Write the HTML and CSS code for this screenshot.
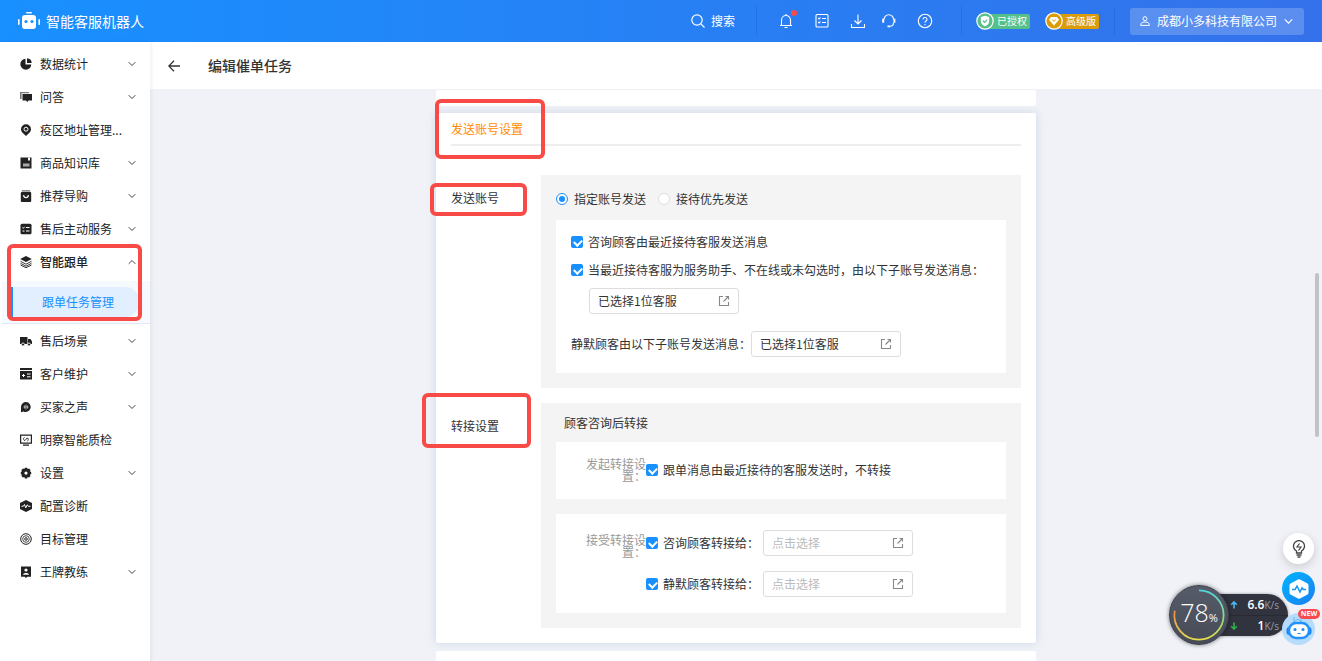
FILE: index.html
```html
<!DOCTYPE html>
<html lang="zh-CN">
<head>
<meta charset="utf-8">
<title>智能客服机器人</title>
<link rel="stylesheet" href="styles.css">
</head>
<body>
<svg class="defs" aria-hidden="true">
  <symbol id="down" viewBox="0 0 8 8"><path d="M.7 2.200 4 5.500l3.300-3.300" fill="none" stroke="currentColor" stroke-width="1"/></symbol>
  <symbol id="open" viewBox="0 0 12 12"><path d="M5 1.500H1.500v9h9V7M7.500 1.500h3v3M10.500 1.500 5.500 6.500" fill="none" stroke="currentColor" stroke-width="1.100"/></symbol>
</svg>
<div class="app">
  <header class="topbar">
    <a class="brand" href="#">
      <svg width="22" height="18" viewBox="0 0 22 18" fill="#fff"><rect x="8" y="0" width="6" height="1.600" rx=".8"/><rect x="4" y="3" width="14" height="14" rx="3"/><rect x="0" y="7" width="1.600" height="6" rx=".8"/><rect x="20.400" y="7" width="1.600" height="6" rx=".8"/><circle cx="8" cy="9.500" r="1.600" fill="#1990ff"/><circle cx="14" cy="9.500" r="1.600" fill="#1990ff"/></svg>
      <span>智能客服机器人</span>
    </a>
    <button class="search" type="button">
      <svg width="14" height="14" viewBox="0 0 14 14" fill="none" stroke="#fff" stroke-width="1.200"><circle cx="6" cy="6" r="5.200"/><path d="m9.800 9.800 3.700 3.700"/></svg>
      <span>搜索</span>
    </button>
    <div class="tools">
      <button class="tool" type="button" aria-label="通知"><svg viewBox="0 0 16 16"><path d="M2 12.500h12M3.500 12.500V7a4.500 4.500 0 0 1 9 0v5.500M8 1v1.500M6.500 14.500h3"/></svg><i class="dot"></i></button>
      <button class="tool" type="button" aria-label="任务"><svg viewBox="0 0 16 16"><rect x="2" y="1.500" width="12" height="12.500" rx="1"/><path d="m4.300 5 .9.900L6.500 4.500M4.300 9l.9.900L6.500 8.500M8 5.500h4M8 9.500h4"/></svg></button>
      <div class="pair">
        <button class="tool" type="button" aria-label="下载"><svg viewBox="0 0 16 16"><path d="M8 1.500v9M4.500 7.500 8 11l3.500-3.500M1.500 11v3.500h13V11"/></svg></button>
        <button class="tool" type="button" aria-label="客服"><svg viewBox="0 0 16 16"><path d="M3 6.500a4.700 4.700 0 0 1 9.600 0M12.500 9.500c0 2.500-1.500 3.800-3.500 3.800"/><path d="M2.200 5.800v4M13.400 5.800v4" stroke-width="2"/><path d="M6.500 13.400h2.500" stroke-width="1.800"/></svg></button>
      </div>
      <button class="tool" type="button" aria-label="帮助"><svg viewBox="0 0 16 16"><circle cx="8" cy="8" r="6.700"/><path d="M6 6.500a2 2 0 1 1 2.800 1.800Q8 8.700 8 9.700M8 11v1.200"/></svg></button>
    </div>
    <div class="plans">
      <span class="plan plan-green"><svg viewBox="0 0 18 18"><circle cx="9" cy="9" r="8.200" fill="#55c08a" stroke="#fff" stroke-width="1.200"/><path d="M9 3.800 13.200 5v4.200c0 2.600-2 4.200-4.200 5-2.200-.8-4.200-2.400-4.200-5V5z" fill="#fff"/><path d="m7 8.800 1.600 1.500L11.200 7.600" fill="none" stroke="#55c08a" stroke-width="1.200"/></svg>已授权</span>
      <span class="plan plan-gold"><svg viewBox="0 0 18 18"><circle cx="9" cy="9" r="8.200" fill="#dc9c08" stroke="#fff" stroke-width="1.200"/><path d="M6 5h6l2 2.700L9 13.500 4 7.700z" fill="#fff"/><path d="M7.200 7.700 9 9.300l1.800-1.600" fill="none" stroke="#dc9c08"/></svg>高级版</span>
    </div>
    <button class="company" type="button">
      <svg width="10" height="10" viewBox="0 0 10 10" fill="none" stroke="#fff"><circle cx="5" cy="2.700" r="2"/><path d="M.7 9.400C.7 6.800 2 6 5 6s4.300.8 4.300 3.400z"/></svg>
      <span>成都小多科技有限公司</span>
      <svg width="9" height="9"><use href="#down"/></svg>
    </button>
  </header>
  <div class="body">
    <nav class="side">
      <a class="item" href="#"><svg class="ico" viewBox="0 0 12 12"><path d="M5.500.7v5.800h5.800A5.500 5.500 0 1 1 5.500.7z"/><path d="M7 .3A5 5 0 0 1 11.700 5H7z"/></svg><span>数据统计</span><svg class="chev"><use href="#down"/></svg></a>
      <a class="item" href="#"><svg class="ico" viewBox="0 0 12 12"><path d="M0 1h9v1.200H1.600V8H0z" opacity=".6"/><path d="M2.500 3H12v6.500H8.500L7.300 11 6 9.500H2.500z"/></svg><span>问答</span><svg class="chev"><use href="#down"/></svg></a>
      <a class="item" href="#"><svg class="ico" viewBox="0 0 12 12"><path d="M6 .3a5 5 0 0 1 5 5C11 8 8.500 9.800 6 12 3.500 9.800 1 8 1 5.300a5 5 0 0 1 5-5z"/><circle cx="6" cy="5.200" r="2" fill="none" stroke="#fff"/></svg><span>疫区地址管理...</span></a>
      <a class="item" href="#"><svg class="ico" viewBox="0 0 12 12"><path d="M.5.500h11v11H.5z"/><path d="M8 .5h2v3H8z" fill="#fff"/><path d="M3 6.500h6.500v3H3z" fill="#aaa"/></svg><span>商品知识库</span><svg class="chev"><use href="#down"/></svg></a>
      <a class="item" href="#"><svg class="ico" viewBox="0 0 12 12"><rect x=".8" y="2" width="10.400" height="10" rx="1"/><path d="M1.800.3h8.400v1.200H1.800z" opacity=".7"/><path d="M3.700 5c0 3.500 4.600 3.500 4.600 0" fill="none" stroke="#fff" stroke-width="1.200"/></svg><span>推荐导购</span><svg class="chev"><use href="#down"/></svg></a>
      <a class="item" href="#"><svg class="ico" viewBox="0 0 12 12"><rect x=".5" y=".8" width="11" height="10.500" rx="1.500"/><path d="m2.500 4.500.8.800 1.300-1.500M6 4.500h3.500M2.500 8h2M6 8h3.500" fill="none" stroke="#fff"/></svg><span>售后主动服务</span><svg class="chev"><use href="#down"/></svg></a>
      <div class="group">
        <a class="item item-open" href="#"><svg class="ico" viewBox="0 0 12 12"><path d="m6 0 5.800 3L6 6 .2 3z"/><path d="M.5 5.300 6 8.200l5.500-2.900M.5 7.300 6 10.200l5.500-2.900M.5 9 6 11.700 11.500 9" fill="none" stroke="#222" stroke-width=".9"/></svg><span>智能跟单</span><svg class="chev chev-up"><use href="#down"/></svg></a>
        <div class="sub"><a class="sub-item" href="#">跟单任务管理</a></div>
        <i class="mark mark-group"></i>
      </div>
      <a class="item" href="#"><svg class="ico" viewBox="0 0 12 12"><path d="M0 2h7.500v7H0zM8 4h2.500L12 6.500V9H8z"/><g stroke="#fff" stroke-width=".8"><circle cx="3" cy="9.500" r="1.500"/><circle cx="9" cy="9.500" r="1.500"/></g></svg><span>售后场景</span><svg class="chev"><use href="#down"/></svg></a>
      <a class="item" href="#"><svg class="ico" viewBox="0 0 12 12"><path d="M0 0h12v2H0zM0 3h12v8.500H0z"/><path d="M2 7.500h3M3.500 6v3M7 6h3.500M7 8.800h3.500" fill="none" stroke="#fff"/></svg><span>客户维护</span><svg class="chev"><use href="#down"/></svg></a>
      <a class="item" href="#"><svg class="ico" viewBox="0 0 12 12"><path d="M6 1a5 5 0 1 1-2.500 9.500L1 11.200V6a5 5 0 0 1 5-5z"/><path d="M6 3.500v5M3.500 6h5M4.500 4.500v3M7.500 4.500v3" stroke="#aaa"/></svg><span>买家之声</span><svg class="chev"><use href="#down"/></svg></a>
      <a class="item" href="#"><svg class="ico" viewBox="0 0 12 12"><path d="M.6 1.200h10.800v8H.6zM3 11.200h6" fill="none" stroke="#222" stroke-width="1.200"/><path d="M4.500 3.500Q3 4 3.700 5.500T5 6.500L7 4q1.500 0 1.300 1.500T7.500 7" fill="none" stroke="#222" stroke-width=".9"/></svg><span>明察智能质检</span></a>
      <a class="item" href="#"><svg class="ico" viewBox="0 0 12 12"><path d="M4.800.8h2.400l.4 1.200 1.500-.4 1.400 1.500-.5 1.400 1.200.5v2.200l-1.200.4.4 1.600L9 10.500l-1.400-.4-.4 1.300H4.800l-.4-1.300-1.500.4-1.500-1.500.5-1.400L.8 7.200V5l1.100-.5-.5-1.400L3 1.600l1.400.4z"/><circle cx="6" cy="6.100" r="1.600" fill="#fff"/></svg><span>设置</span><svg class="chev"><use href="#down"/></svg></a>
      <a class="item" href="#"><svg class="ico" viewBox="0 0 12 12"><path d="m6 0 6 3v6l-6 3-6-3V3z"/><path d="M1.500 6.300h1.700L4.500 4.500l1.300 3.300 1.500-3 1 1.500h2.200" fill="none" stroke="#fff"/></svg><span>配置诊断</span></a>
      <a class="item" href="#"><svg class="ico" viewBox="0 0 12 12"><g fill="none" stroke="#222"><circle cx="6" cy="6" r="5.300"/><circle cx="6" cy="6" r="3.300" stroke-width=".8"/><circle cx="6" cy="6" r="1.300"/></g></svg><span>目标管理</span></a>
      <a class="item" href="#"><svg class="ico" viewBox="0 0 12 12"><path d="M1 .5h10v10.300H7.300L6 12l-1.300-1.200H1z"/><circle cx="6" cy="4" r="1.600" fill="#fff"/><path d="M3 8.700C3 6.500 9 6.500 9 8.700z" fill="#fff"/></svg><span>王牌教练</span><svg class="chev"><use href="#down"/></svg></a>
    </nav>
    <main class="main">
      <div class="pagehead">
        <button class="back" type="button" aria-label="返回"><svg width="12" height="12" viewBox="0 0 12 12" fill="none" stroke="#333" stroke-width="1.300"><path d="M12 6H1M6 .8.800 6 6 11.200"/></svg></button>
        <h1>编辑催单任务</h1>
      </div>
      <div class="scroll">
        <div class="card card-prev"></div>
        <form class="card card-main">
          <h2><span class="anchor">发送账号设置<i class="mark mark-title"></i></span></h2>
          <section class="field">
            <h3><span class="anchor">发送账号<i class="mark mark-account"></i></span></h3>
            <div class="panel">
              <div class="radios">
                <label><input type="radio" name="mode" checked>指定账号发送</label>
                <label><input type="radio" name="mode">接待优先发送</label>
              </div>
              <div class="box box-account">
                <label class="line"><input type="checkbox" checked>咨询顾客由最近接待客服发送消息</label>
                <label class="line"><input type="checkbox" checked>当最近接待客服为服务助手、不在线或未勾选时，由以下子账号发送消息：</label>
                <button class="pick pick-indent" type="button"><span>已选择1位客服</span><svg><use href="#open"/></svg></button>
                <div class="silent"><span>静默顾客由以下子账号发送消息：</span><button class="pick" type="button"><span>已选择1位客服</span><svg><use href="#open"/></svg></button></div>
              </div>
            </div>
          </section>
          <section class="field">
            <h3><span class="anchor">转接设置<i class="mark mark-transfer"></i></span></h3>
            <div class="panel">
              <h4>顾客咨询后转接</h4>
              <div class="box box-transfer">
                <span class="hint">发起转接设置：</span>
                <div class="rows">
                  <div class="row"><label><input type="checkbox" checked>跟单消息由最近接待的客服发送时，不转接</label></div>
                </div>
              </div>
              <div class="box box-transfer">
                <span class="hint hint-low">接受转接设置：</span>
                <div class="rows">
                  <div class="row"><label><input type="checkbox" checked>咨询顾客转接给：</label><button class="pick pick-empty" type="button"><span>点击选择</span><svg><use href="#open"/></svg></button></div>
                  <div class="row"><label><input type="checkbox" checked>静默顾客转接给：</label><button class="pick pick-empty" type="button"><span>点击选择</span><svg><use href="#open"/></svg></button></div>
                </div>
              </div>
            </div>
          </section>
        </form>
        <div class="card card-next"></div>
      </div>
    </main>
  </div>
  <i class="thumb"></i>
  <div class="meter">
    <div class="rates">
      <div class="rate"><svg viewBox="0 0 8 8" stroke="#4db8f5"><path d="M4 7.500V1M1.200 3.800 4 1l2.800 2.800"/></svg><b>6.6</b><span>K/s</span></div>
      <div class="rate"><svg viewBox="0 0 8 8" stroke="#2fb344"><path d="M4 .5V7M1.200 4.200 4 7l2.800-2.800"/></svg><b>1</b><span>K/s</span></div>
    </div>
    <div class="gauge">
      <svg class="ring" viewBox="0 0 60 60" fill="none" stroke-width="1.800">
        <defs><linearGradient id="arc" x1="0" y1="1" x2="0" y2="0"><stop offset="0" stop-color="#e5dc50"/><stop offset=".35" stop-color="#9edb78"/><stop offset="1" stop-color="#4fd6dc"/></linearGradient><linearGradient id="arc2" x1="0" y1="1" x2="0" y2="0"><stop offset="0" stop-color="#e5dc50"/><stop offset="1" stop-color="#ee8c46"/></linearGradient></defs>
        <path d="M30 4.500a25.500 25.500 0 0 1 0 51" stroke="url(#arc)"/><path d="M30 55.500A25.500 25.500 0 0 1 4.900 25.500" stroke="url(#arc2)"/>
      </svg>
      <span class="pct">78<small>%</small></span>
    </div>
  </div>
  <div class="floats">
    <button class="fab fab-tip" type="button" aria-label="提示"><svg width="14" height="18" viewBox="0 0 14 18" fill="none" stroke="#444" stroke-width="1.300"><path d="M4.500 13v-2A5.500 5.500 0 1 1 9.500 11v2zM4.500 15h5M5.500 17h3"/><path d="M7.500 3.500 5 7h4l-2.500 3.500" stroke-width="1.200"/></svg></button>
    <button class="fab fab-pulse" type="button" aria-label="诊断"><svg width="20" height="20" viewBox="0 0 20 20"><path d="M9 .6q1-.6 2 0l7.500 4q1 .6 1 1.700v7.400q0 1.100-1 1.700l-7.500 4q-1 .6-2 0l-7.500-4q-1-.6-1-1.700V6.300q0-1.100 1-1.700z" fill="#fff"/><path d="M3 10.500h3L8 7l3 6 2-4 1.200 1.500H17" fill="none" stroke="#1296f5" stroke-width="1.500"/></svg></button>
    <button class="fab fab-bot" type="button" aria-label="机器人"><svg width="32" height="32" viewBox="0 0 32 32"><path d="M11 4v5l4-3 3 3V5" fill="none" stroke="#64b5f6"/><rect x="3.500" y="14" width="25" height="8" rx="3" fill="#1585f5"/><rect x="6" y="10" width="20" height="15" rx="7" fill="#fff" stroke="#2490fa" stroke-width="2.500"/><circle cx="12" cy="16.500" r="1.500" fill="#1c87f5"/><circle cx="20" cy="16.500" r="1.500" fill="#1c87f5"/><path d="M14.500 20.500h3" stroke="#1c87f5"/></svg><span class="new">NEW</span></button>
  </div>
</div>
</body>
</html>
```

FILE: styles.css
```css
* { box-sizing: border-box; }
body { margin: 0; font: 12px/18px "Noto Sans CJK SC", "Noto Sans", sans-serif; color: #333; overflow: hidden; }
h1, h2, h3, h4 { margin: 0; font-weight: 400; font-size: 12px; }
button { font: inherit; color: inherit; border: 0; padding: 0; background: none; cursor: pointer; }
a { color: inherit; text-decoration: none; }
svg { flex: none; display: block; }
.defs { display: none; }
.app { position: relative; height: 100vh; display: flex; flex-direction: column; }

.topbar { flex: none; height: 42px; display: flex; align-items: center; padding: 0 18px; color: #fff; background: linear-gradient(90deg, #1990ff, #3471ea); }
.brand { display: flex; align-items: center; gap: 6px; font-size: 14px; margin-right: auto; }
.search { display: flex; align-items: center; gap: 6px; padding-right: 21px; }
.tools { display: flex; gap: 20px; height: 30px; align-items: center; padding: 0 28px 0 21px; border: solid rgba(0, 40, 140, .12); border-width: 0 1px; }
.pair { display: flex; gap: 15px; }
.tool { position: relative; width: 16px; height: 16px; }
.tool svg { width: 16px; height: 16px; fill: none; stroke: #fff; stroke-width: 1.1; }
.dot { position: absolute; right: -3px; top: -3px; width: 6px; height: 6px; border-radius: 50%; background: #fa4b4b; }
.plans { display: flex; align-items: center; gap: 15px; height: 30px; padding: 0 15px 0 14px; border-right: 1px solid rgba(0, 40, 140, .12); margin-right: 15px; }
.plan { display: flex; align-items: center; height: 15px; width: 54px; gap: 3px; border-radius: 2px; font-size: 10px; white-space: nowrap; }
.plan svg { width: 18px; height: 18px; }
.plan-green { background: linear-gradient(90deg, transparent 8px, #55c08a 8px); }
.plan-gold { background: linear-gradient(90deg, transparent 8px, #dc9c08 8px); }
.company { display: flex; align-items: center; gap: 7px; height: 27px; padding: 0 11px 0 10px; border-radius: 3px; background: rgba(255, 255, 255, .2); }

.body { flex: 1; min-height: 0; display: flex; }
.side { position: relative; z-index: 1; flex: none; width: 150px; padding-top: 5px; background: #fff; box-shadow: 1px 0 4px rgba(0, 20, 60, .08); }
.item { display: flex; align-items: center; gap: 8px; height: 33px; padding: 0 14px 0 20px; color: #222; white-space: nowrap; }
.ico { width: 12px; height: 12px; fill: #222; }
.chev { width: 8px; height: 8px; margin-left: auto; color: #444; }
.chev-up { transform: rotate(180deg); }
.item-open { font-weight: 500; }
.group { position: relative; }
.sub { margin: 3px 0 0 2px; padding: 6px 10px 6px 9px; background: #f6f9fe; border-bottom: 1px solid #e3eaf5; }
.sub-item { display: block; padding-left: 29px; line-height: 30px; background: #e1effe; border-left: 2px solid #1890ff; border-radius: 0 15px 15px 0; color: #1890ff; }

.mark { position: absolute; border: 4px solid #f84b47; border-radius: 6px; pointer-events: none; }
.anchor { position: relative; display: inline-block; }
.mark-group { left: 7px; right: 8px; top: -1px; bottom: 3px; }
.mark-title { left: -16px; top: -14px; width: 110px; height: 60px; }
.mark-account { left: -21px; top: 8px; width: 97px; height: 33px; }
.mark-transfer { left: -29px; top: -10px; width: 109px; height: 55px; }

.main { flex: 1; min-width: 0; display: flex; flex-direction: column; background: #f0f2f7; }
.pagehead { flex: none; height: 47px; display: flex; align-items: center; gap: 28px; padding-left: 18px; background: #fff; }
.back { width: 12px; height: 12px; }
.pagehead h1 { font-size: 14px; font-weight: 500; padding-bottom: 2px; }
.scroll { flex: 1; min-height: 0; overflow: hidden; display: flex; flex-direction: column; align-items: center; padding-top: 1px; }
.card { flex: none; width: 600px; max-width: 100%; background: #fff; border-radius: 2px; }
.card-prev { height: 16px; }
.card-main { margin: 7px 0 8px; padding: 0 15px 15px; box-shadow: 0 0 10px rgba(120, 145, 190, .28); }
.card-next { position: relative; height: 60px; }
.card-main h2 { line-height: 31px; border-bottom: 2px solid #eee; color: #ff8c00; margin-bottom: 29px; }
.field { display: flex; }
.field + .field { margin-top: 15px; }
.field h3 { width: 90px; line-height: 46px; }
.panel { flex: 1; padding: 0 15px 15px; background: #f4f4f4; }
.panel h4 { height: 39px; line-height: 40px; padding-left: 8px; }
.radios { display: flex; gap: 12px; height: 45px; padding-top: 2px; }
.radios label { display: flex; align-items: center; gap: 6px; }
input { appearance: none; flex: none; display: block; margin: 0; width: 12px; height: 12px; position: relative; }
input[type="radio"] { border: 1px solid #ddd; border-radius: 50%; background: #fff; }
input[type="radio"]:checked { border-color: #1890ff; }
input[type="radio"]:checked::after { content: ""; position: absolute; inset: 2px; border-radius: 50%; background: #1890ff; }
input[type="checkbox"] { border-radius: 2px; background: #1890ff; }
input[type="checkbox"]:checked::after { content: ""; position: absolute; left: 3px; top: 3px; width: 6px; height: 4px; border: solid #fff; border-width: 0 0 2px 2px; transform: rotate(-45deg); }
.box { background: #fff; padding: 0 15px; }
.box + .box { margin-top: 15px; }
.box-account { padding: 8px 15px 16px; }
.line { display: flex; align-items: center; gap: 5px; height: 28px; white-space: nowrap; }
.pick { display: flex; align-items: center; justify-content: space-between; width: 150px; height: 26px; padding: 0 8px; border: 1px solid #ddd; border-radius: 3px; background: #fff; }
.pick svg { width: 12px; height: 12px; color: #888; }
.pick-indent { margin: 4px 0 17px 18px; }
.pick-empty { color: #bbb; }
.silent { display: flex; align-items: center; }
.box-transfer { display: flex; padding: 16px 15px; }
.box-transfer:first-of-type { padding-top: 15px; }
.hint { width: 75px; padding-left: 15px; line-height: 12px; text-align: right; color: #999; padding-top: 1px; }
.hint-low { padding-top: 4px; }
.rows { display: flex; flex-direction: column; gap: 15px; }
.row { display: flex; align-items: center; gap: 4px; height: 26px; }
.row label { display: flex; align-items: center; gap: 5px; white-space: nowrap; }

.thumb { position: absolute; right: 3px; top: 273px; width: 4px; height: 164px; border-radius: 2px; background: #c2c3c7; }
.meter { position: absolute; right: 34px; bottom: 16px; width: 119px; height: 60px; display: flex; align-items: center; font-family: "Open Sans", sans-serif; color: #fff; }
.rates { position: absolute; right: 0; top: 9px; width: 90px; height: 42px; padding-left: 32px; border-radius: 0 21px 21px 0; background: #31343f; box-shadow: 0 0 3px rgba(0, 0, 0, .4); }
.rate { display: flex; align-items: center; height: 21px; padding: 0 9px 0 0; }
.rate + .rate { border-top: 1px solid #282a33; }
.rate svg { width: 8px; height: 8px; fill: none; stroke-width: 1.6; margin-right: auto; }
.rate b { font-size: 12px; font-weight: 600; }
.rate span { font-size: 10px; color: #9a9ca6; }
.gauge { position: relative; width: 60px; height: 60px; display: flex; align-items: center; justify-content: center; border-radius: 50%; background: linear-gradient(#565b69, #474b57); border: 1px solid #3c404b; box-shadow: 0 0 4px rgba(0, 0, 0, .5); }
.ring { position: absolute; inset: 0; width: 58px; height: 58px; }
.pct { font-size: 25px; font-weight: 300; line-height: 30px; }
.pct small { font-size: 11px; font-weight: 400; }
.floats { position: absolute; right: 7px; bottom: 16px; width: 33px; display: flex; flex-direction: column; align-items: center; gap: 8px; }
.fab { position: relative; width: 33px; height: 33px; border-radius: 50%; display: flex; align-items: center; justify-content: center; }
.fab-tip { width: 31px; height: 31px; background: #fff; box-shadow: 0 3px 10px rgba(0, 0, 0, .16); }
.fab-pulse { background: linear-gradient(135deg, #00b4ff, #1a80f0); }
.fab-bot { height: 32px; background: #b5dcfb; }
.new { position: absolute; right: -5px; top: -4px; width: 22px; height: 10px; border-radius: 5px; background: #f84b50; color: #fff; font: 700 7px/10px "Open Sans", sans-serif; text-align: center; }
```
